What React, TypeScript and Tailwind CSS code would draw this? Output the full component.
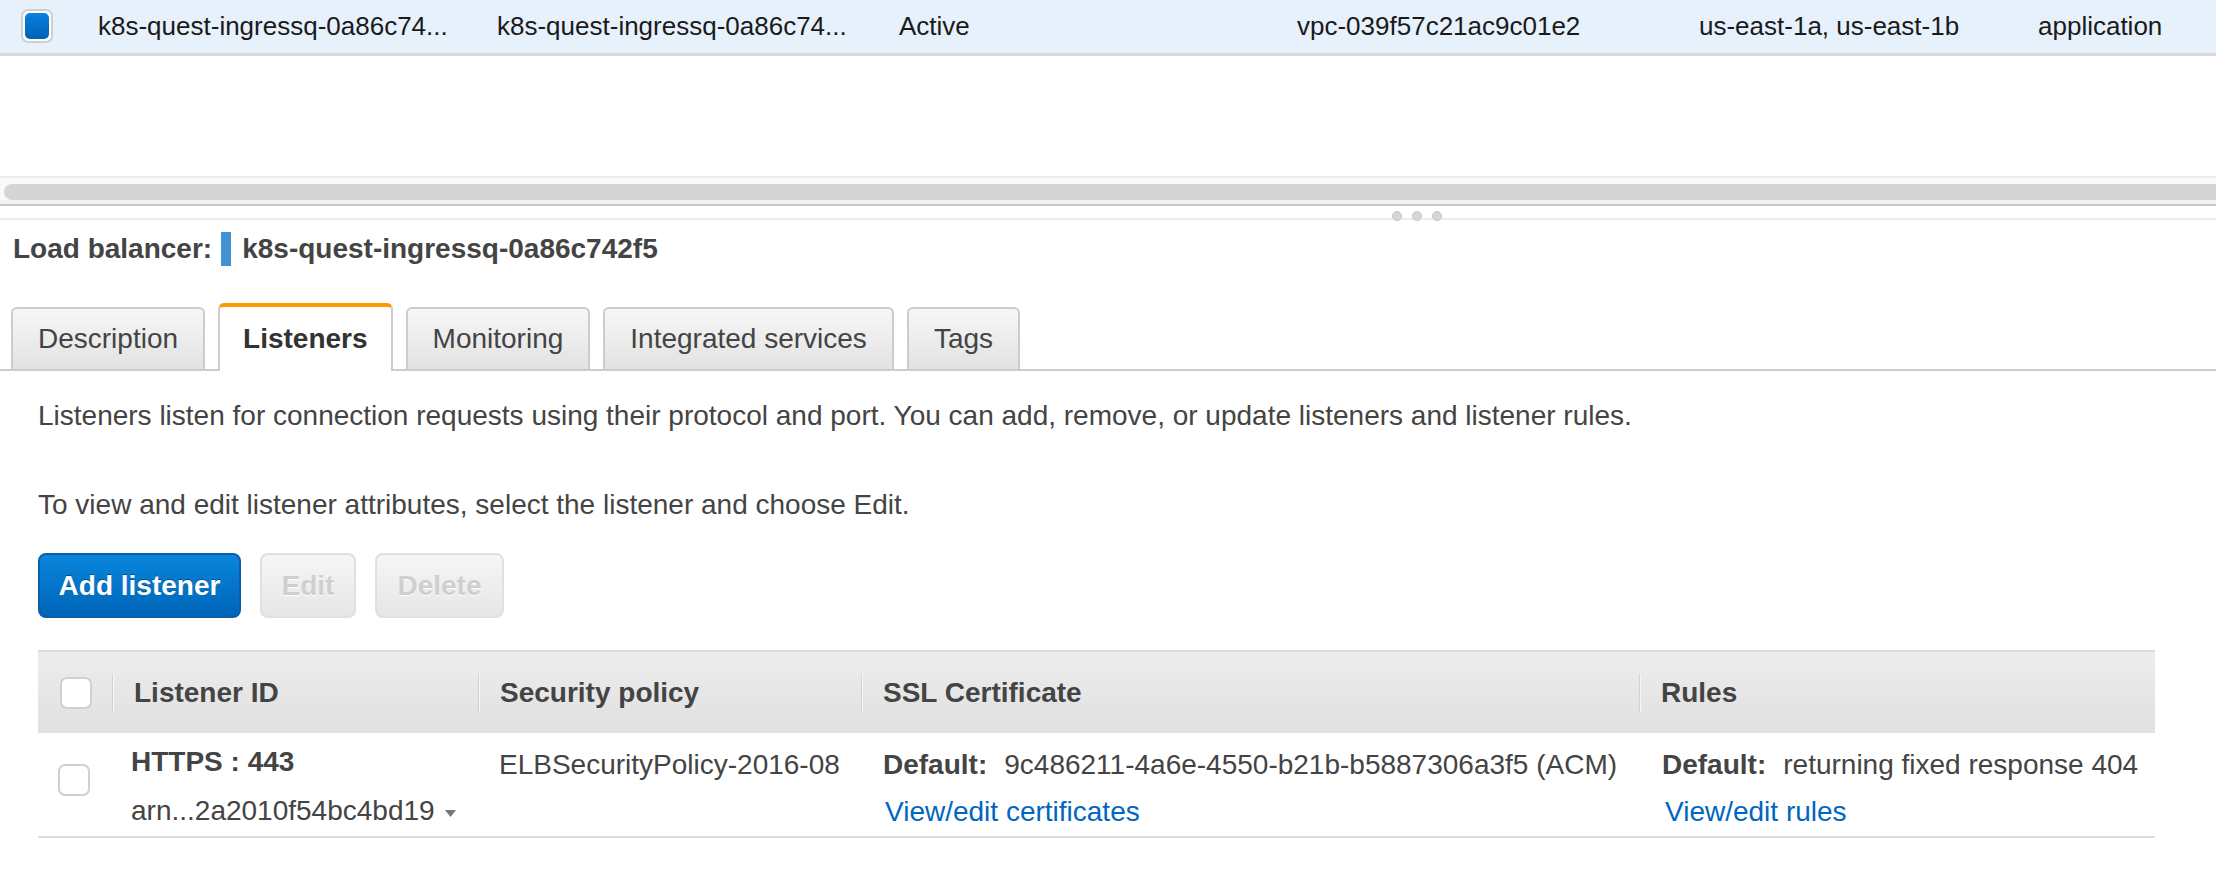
import React from 'react';

const tabs = ['Description', 'Listeners', 'Monitoring', 'Integrated services', 'Tags'];

function Checkbox({ checked = false }: { checked?: boolean }) {
  if (checked) {
    return (
      <div className="w-[32px] h-[34px] rounded-[7px] border-2 border-[#cfcfcf] p-[2px] bg-white">
        <div className="w-full h-full rounded-[5px] bg-gradient-to-b from-[#0a80dd] to-[#0062b6]" />
      </div>
    );
  }
  return <div className="w-[32px] h-[32px] rounded-[7px] border-2 border-[#d0d0d0] bg-white" />;
}

function HeaderCell({ label, w, sep = true }: { label: string; w: string; sep?: boolean }) {
  return (
    <div className={`${w} h-full flex items-center`}>
      {sep && <div className="w-[2px] h-[38px] bg-[#d2d2d2] border-r border-[#f6f6f6]" />}
      <span className="pl-[20px] font-bold text-[#444]">{label}</span>
    </div>
  );
}

export default function App() {
  return (
    <div className="w-[2216px] h-[874px] overflow-hidden bg-white font-['Liberation_Sans',Arial,sans-serif]">
      {/* selected row of the list */}
      <div className="h-[56px] flex items-center bg-[#e7f1fc] border-b-[3px] border-[#d9d9d9] text-[26px] text-[#1a1a1a]">
        <div className="w-[98px] pl-[21px] pb-[1px]">
          <Checkbox checked />
        </div>
        <div className="w-[399px] whitespace-nowrap">k8s-quest-ingressq-0a86c74...</div>
        <div className="w-[402px] whitespace-nowrap">k8s-quest-ingressq-0a86c74...</div>
        <div className="w-[398px]">Active</div>
        <div className="w-[402px]">vpc-039f57c21ac9c01e2</div>
        <div className="w-[339px] whitespace-nowrap">us-east-1a, us-east-1b</div>
        <div>application</div>
      </div>

      <div className="h-[120px]" />

      {/* horizontal scrollbar */}
      <div className="border-t-2 border-[#ededed] bg-[#fafafa] pt-[6px] border-b-2 border-b-[#c6c6c6]">
        <div className="ml-[4px] h-[16px] rounded-l-full bg-[#d5d5d5]" />
        <div className="h-[4px] bg-[#f2f2f2]" />
      </div>

      {/* splitter */}
      <div className="h-[12px]" />
      <div className="relative h-[2px] bg-[#ececec]">
        <div className="absolute left-[1392px] -top-[7px] flex gap-[10px]">
          <div className="w-[10px] h-[10px] rounded-full bg-[#d6d6d6] border border-[#c4c4c4]" />
          <div className="w-[10px] h-[10px] rounded-full bg-[#d6d6d6] border border-[#c4c4c4]" />
          <div className="w-[10px] h-[10px] rounded-full bg-[#d6d6d6] border border-[#c4c4c4]" />
        </div>
      </div>

      {/* details title */}
      <div className="mt-[12px] h-[34px] flex items-center pl-[13px] text-[28px] font-bold text-[#444]">
        <span>Load balancer:</span>
        <span className="ml-[9px] w-[10px] h-[34px] bg-[#4393d3]" />
        <span className="ml-[11px]">k8s-quest-ingressq-0a86c742f5</span>
      </div>

      {/* tabs */}
      <div className="mt-[37px] flex items-end gap-[13px] pl-[11px] border-b-2 border-[#cccccc] text-[28px]">
        {tabs.map((t) =>
          t === 'Listeners' ? (
            <div
              key={t}
              className="-mb-[2px] h-[68px] px-[23px] flex items-center bg-white border-x-2 border-[#cccccc] border-t-[4px] border-t-[#ff9900] rounded-t-[6px] font-bold text-[#333]"
            >
              {t}
            </div>
          ) : (
            <div
              key={t}
              className="h-[62px] px-[25px] flex items-center bg-gradient-to-b from-[#f7f7f7] to-[#e2e2e2] border-2 border-b-0 border-[#cccccc] rounded-t-[6px] text-[#444]"
            >
              {t}
            </div>
          )
        )}
      </div>

      {/* tab content */}
      <div className="pl-[38px] text-[28px] text-[#444] leading-[32px]">
        <p className="mt-[29px]">
          Listeners listen for connection requests using their protocol and port. You can add, remove, or update listeners and listener rules.
        </p>
        <p className="mt-[57px]">To view and edit listener attributes, select the listener and choose Edit.</p>

        <div className="mt-[32px] flex gap-[19px]">
          <button className="h-[65px] w-[203px] rounded-[8px] border-2 border-[#0b5ea8] bg-gradient-to-b from-[#0a86dc] to-[#0065b8] text-white font-bold [text-shadow:0_-1px_0_rgba(0,0,0,0.35)]">
            Add listener
          </button>
          <button className="h-[65px] w-[96px] rounded-[8px] border-2 border-[#e0e0e0] bg-gradient-to-b from-[#f6f6f6] to-[#e6e6e6] text-[#cfcfcf] font-bold [text-shadow:0_1px_0_#ffffff]">
            Edit
          </button>
          <button className="h-[65px] w-[129px] rounded-[8px] border-2 border-[#e0e0e0] bg-gradient-to-b from-[#f6f6f6] to-[#e6e6e6] text-[#cfcfcf] font-bold [text-shadow:0_1px_0_#ffffff]">
            Delete
          </button>
        </div>

        {/* listeners table */}
        <div className="mt-[32px] w-[2117px]">
          <div className="h-[83px] flex items-center border-t-2 border-[#dcdcdc] bg-gradient-to-b from-[#ededed] to-[#e0e0e0]">
            <div className="w-[74px] h-full flex items-center pl-[22px]">
              <Checkbox />
            </div>
            <HeaderCell label="Listener ID" w="w-[366px]" />
            <HeaderCell label="Security policy" w="w-[383px]" />
            <HeaderCell label="SSL Certificate" w="w-[778px]" />
            <HeaderCell label="Rules" w="w-[516px]" />
          </div>
          <div className="h-[105px] flex border-b-2 border-[#dddddd] leading-[36px]">
            <div className="w-[74px] pl-[20px] pt-[31px]">
              <Checkbox />
            </div>
            <div className="w-[366px] pl-[19px] pt-[11px] flex flex-col gap-[13px]">
              <span className="font-bold">HTTPS : 443</span>
              <span className="flex items-center whitespace-nowrap">
                arn...2a2010f54bc4bd19
                <svg className="ml-[10px] mt-[4px]" width="11" height="7" viewBox="0 0 11 7">
                  <path d="M0 0 H11 L5.5 7 Z" fill="#777" />
                </svg>
              </span>
            </div>
            <div className="w-[383px] pl-[21px] pt-[14px] whitespace-nowrap">ELBSecurityPolicy-2016-08</div>
            <div className="w-[778px] pl-[22px] pt-[14px] flex flex-col gap-[11px] whitespace-nowrap">
              <span>
                <span className="font-bold">Default:</span>
                <span className="ml-[17px]">9c486211-4a6e-4550-b21b-b5887306a3f5 (ACM)</span>
              </span>
              <span className="pl-[2px] text-[#0066c0]">View/edit certificates</span>
            </div>
            <div className="w-[516px] pl-[23px] pt-[14px] flex flex-col gap-[11px] whitespace-nowrap">
              <span>
                <span className="font-bold">Default:</span>
                <span className="ml-[17px]">returning fixed response 404</span>
              </span>
              <span className="pl-[3px] text-[#0066c0]">View/edit rules</span>
            </div>
          </div>
        </div>
      </div>
    </div>
  );
}
